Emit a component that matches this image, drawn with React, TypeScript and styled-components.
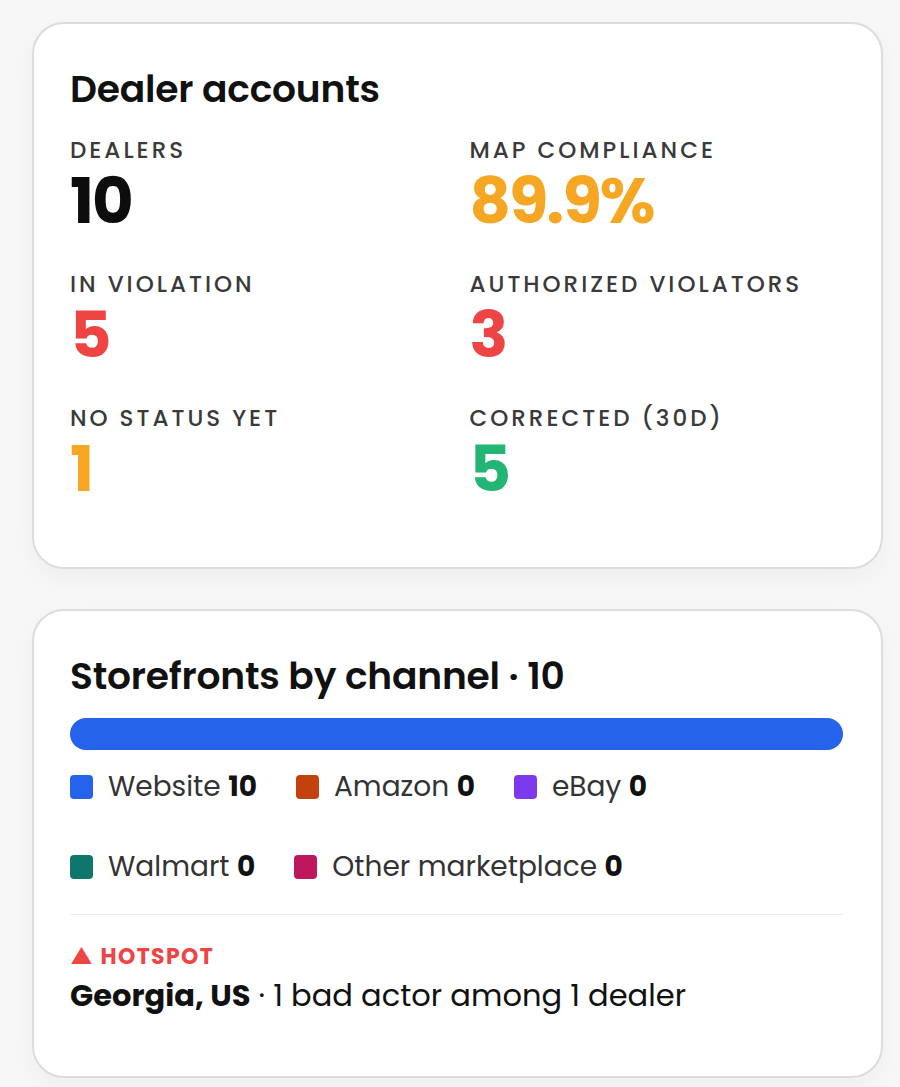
import styled, { createGlobalStyle } from 'styled-components';

const GlobalStyle = createGlobalStyle`
  html, body {
    margin: 0;
    padding: 0;
    background: #f7f7f7;
  }
  body {
    font-family: Poppins, Inter, 'Noto Sans', sans-serif;
    color: #111;
    -webkit-font-smoothing: antialiased;
  }
`;

const Page = styled.div`
  display: flex;
  flex-direction: column;
  gap: 40px;
  padding: 22px 17px 12px 32px;
`;

const Card = styled.section<{ $bottom: number }>`
  background: #fff;
  border: 2px solid #dcdcdc;
  border-radius: 32px;
  box-shadow: 0 10px 28px rgba(0, 0, 0, 0.04);
  padding: 43px 38px ${(p) => p.$bottom}px 36px;
`;

const Title = styled.h2`
  margin: 0;
  font-size: 37.6px;
  line-height: 44px;
  font-weight: 600;
  color: #111;
  letter-spacing: -0.2px;
`;

const StatGrid = styled.div`
  display: grid;
  grid-template-columns: 1fr 1fr;
  column-gap: 26px;
  row-gap: 36px;
  margin-top: 25px;
`;

const Stat = styled.div`
  display: flex;
  flex-direction: column;
  gap: 4px;
`;

const Label = styled.div`
  font-size: 23px;
  line-height: 28px;
  font-weight: 500;
  letter-spacing: 3px;
  text-transform: uppercase;
  color: #3a3a3a;
`;

const Value = styled.div<{ $tone: string }>`
  font-size: 64px;
  line-height: 66px;
  font-weight: 700;
  letter-spacing: -2px;
  color: ${(p) => p.$tone};
`;

const Bar = styled.div`
  display: flex;
  height: 32px;
  margin-top: 20px;
  border-radius: 16px;
  overflow: hidden;
  background: #e5e7eb;
`;

const Segment = styled.div<{ $color: string }>`
  background: ${(p) => p.$color};
`;

const Legend = styled.div`
  display: flex;
  flex-wrap: wrap;
  column-gap: 39px;
  row-gap: 40px;
  margin-top: 17px;
`;

const LegendItem = styled.div`
  display: flex;
  align-items: center;
  gap: 15px;
  height: 40px;
  font-size: 28px;
  color: #333;
`;

const Swatch = styled.span<{ $color: string }>`
  width: 23px;
  height: 24px;
  border-radius: 4px;
  background: ${(p) => p.$color};
`;

const Count = styled.b`
  font-weight: 700;
  color: #111;
`;

const Divider = styled.hr`
  margin: 27px 0 0;
  border: 0;
  border-top: 1px solid #ececec;
`;

const Hotspot = styled.div`
  margin-top: 29px;
  font-size: 22px;
  line-height: 26px;
  font-weight: 700;
  letter-spacing: 1.4px;
  color: #ef4444;
`;

const HotspotLine = styled.div`
  margin-top: 8px;
  font-size: 30.5px;
  line-height: 36px;
  color: #111;
  b {
    font-weight: 700;
  }
`;

const stats = [
  { label: 'Dealers', value: '10', tone: '#0d0d0d' },
  { label: 'MAP compliance', value: '89.9%', tone: '#f5a623' },
  { label: 'In violation', value: '5', tone: '#ef4444' },
  { label: 'Authorized violators', value: '3', tone: '#ef4444' },
  { label: 'No status yet', value: '1', tone: '#f5a623' },
  { label: 'Corrected (30d)', value: '5', tone: '#22b573' },
];

const channels = [
  { name: 'Website', count: 10, color: '#2563eb' },
  { name: 'Amazon', count: 0, color: '#c2410c' },
  { name: 'eBay', count: 0, color: '#7c3aed' },
  { name: 'Walmart', count: 0, color: '#0f766e' },
  { name: 'Other marketplace', count: 0, color: '#be185d' },
];

export default function App() {
  const total = channels.reduce((s, c) => s + c.count, 0);

  return (
    <>
      <GlobalStyle />
      <Page>
        <Card $bottom={65}>
          <Title>Dealer accounts</Title>
          <StatGrid>
            {stats.map((s) => (
              <Stat key={s.label}>
                <Label>{s.label}</Label>
                <Value $tone={s.tone}>{s.value}</Value>
              </Stat>
            ))}
          </StatGrid>
        </Card>

        <Card $bottom={62}>
          <Title>Storefronts by channel · {total}</Title>
          <Bar>
            {channels
              .filter((c) => c.count > 0)
              .map((c) => (
                <Segment
                  key={c.name}
                  $color={c.color}
                  style={{ width: `${(c.count / total) * 100}%` }}
                />
              ))}
          </Bar>
          <Legend>
            {channels.map((c) => (
              <LegendItem key={c.name}>
                <Swatch $color={c.color} />
                <span>
                  {c.name} <Count>{c.count}</Count>
                </span>
              </LegendItem>
            ))}
          </Legend>
          <Divider />
          <Hotspot>▲ HOTSPOT</Hotspot>
          <HotspotLine>
            <b>Georgia, US</b> · 1 bad actor among 1 dealer
          </HotspotLine>
        </Card>
      </Page>
    </>
  );
}
